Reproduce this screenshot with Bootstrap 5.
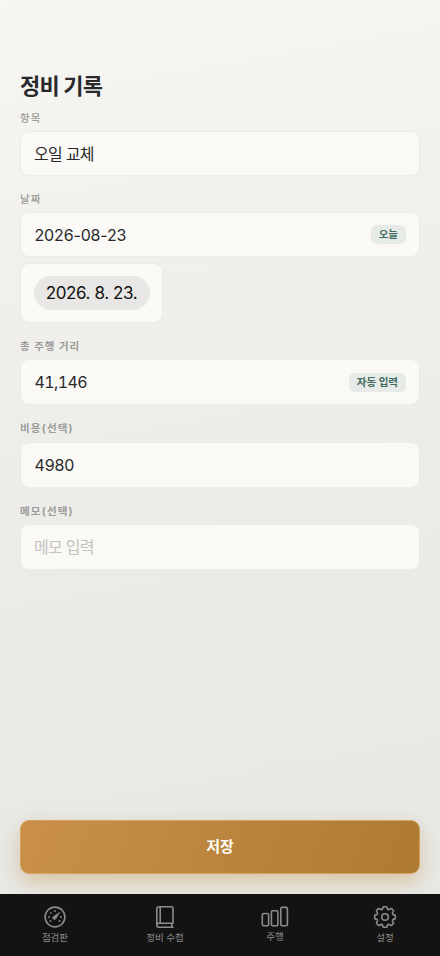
<!DOCTYPE html>
<html lang="ko">
<head>
<meta charset="utf-8">
<meta name="viewport" content="width=device-width, initial-scale=1">
<title>정비 기록</title>
<link href="https://cdn.jsdelivr.net/npm/bootstrap@5.3.0/dist/css/bootstrap.min.css" rel="stylesheet">
<style>
body{font-family:Inter,"Noto Sans CJK KR",sans-serif;color:#29292c;background:#e9eae5;overflow:hidden}
.screen{height:956px;background:linear-gradient(170deg,#f6f6f3 0%,#f0efec 30%,#e9e9e5 70%,#e7e9e5 100%)}
.screen main{padding:0 20px 20px}
.page-title{font-size:22px;font-weight:700;line-height:32px;letter-spacing:-.8px;margin:70px 0 9px}
.field-label{display:block;font-size:10.5px;font-weight:500;line-height:16px;letter-spacing:1px;color:#9b9b98;margin-bottom:4px}
.field-label.strong{font-weight:700;margin-bottom:4.4px}
.field-label.optional{letter-spacing:1.2px}
.field-box{height:45px;border:1px solid #ecebe8;border-radius:9px;background:#faf9f6;padding:0 13px;font-size:16px}
.field-label.strong + .field-box{height:46px}
.field-box input{min-width:0;color:inherit;font-size:16px;line-height:24px;letter-spacing:-.15px;text-indent:.5px}
.field-box input.tabular{font-variant-numeric:tabular-nums;letter-spacing:-.6px}
.field-box input.ko{letter-spacing:-.7px;text-indent:0}
.field-box input::placeholder{color:#c2c2bf;opacity:1}
.chip{font-size:10.5px;font-weight:700;line-height:19px;color:#426b62;background:#e6ebe7;border-radius:6px;padding:0 8px}
.date-card{width:143px;height:60px;border:1px solid #ecebe8;border-radius:9px;background:#faf9f6;margin-top:6px}
.date-pill{width:116px;height:34px;border-radius:17px;background:#e8e7e5;color:#111;font-size:17px;letter-spacing:-.4px;padding-top:2px}
.save-btn,.save-btn:hover{height:54px;border:1px solid #d4a360;border-radius:9px;background:linear-gradient(110deg,#ca9049,#ae7a32);color:#fffdf8;font-size:15px;font-weight:700;box-shadow:0 8px 20px rgba(190,135,60,.38)}
.tabs{height:62px;background:#131313;position:relative}
.tabs a{color:#8b8b8b;font-size:9.5px;line-height:14px;padding-top:11px}
.tabs svg{fill:none;stroke:currentColor;stroke-width:1.6;stroke-linejoin:round;stroke-linecap:round;margin-bottom:2px}
</style>
<script src="https://cdn.jsdelivr.net/npm/bootstrap@5.3.0/dist/js/bootstrap.bundle.min.js"></script>
</head>
<body>
<div class="screen d-flex flex-column">
<main class="d-flex flex-column flex-grow-1">
<h1 class="page-title">정비 기록</h1>
<div>
<label class="field-label" for="item">항목</label>
<div class="field-box d-flex align-items-center"><input id="item" class="ko border-0 bg-transparent p-0 w-100" value="오일 교체"></div>
</div>
<div class="pt-3">
<label class="field-label" for="day">날짜</label>
<div class="field-box d-flex align-items-center"><input id="day" class="border-0 bg-transparent p-0 flex-grow-1" value="2026-08-23"><span class="chip">오늘</span></div>
<div class="date-card d-flex align-items-center justify-content-center"><span class="date-pill d-flex align-items-center justify-content-center">2026. 8. 23.</span></div>
</div>
<div class="pt-3 mt-n1">
<label class="field-label strong" for="odo">총 주행 거리</label>
<div class="field-box d-flex align-items-center"><input id="odo" class="tabular border-0 bg-transparent p-0 flex-grow-1" value="41,146"><span class="chip">자동 입력</span></div>
</div>
<div class="pt-3">
<label class="field-label strong optional" for="cost">비용(선택)</label>
<div class="field-box d-flex align-items-center"><input id="cost" class="border-0 bg-transparent p-0 w-100" value="4980"></div>
</div>
<div class="pt-3">
<label class="field-label strong optional" for="memo">메모(선택)</label>
<div class="field-box d-flex align-items-center"><input id="memo" class="ko border-0 bg-transparent p-0 w-100" placeholder="메모 입력"></div>
</div>
<button class="btn save-btn w-100 mt-auto p-0">저장</button>
</main>
<nav class="tabs d-flex">
<a class="col-3 d-flex flex-column align-items-center text-decoration-none" href="#"><svg width="24" height="24" viewBox="-12 -12 24 24"><circle r="9.9"/><path d="M-1.9 1.7A1.5 1.5 0 0 0 .8 1.7L4.9-4.7-1.3-.8A1.5 1.5 0 0 0-1.9 1.7Z" fill="currentColor" stroke="currentColor" stroke-width=".5"/><g fill="currentColor" stroke="none"><circle cx="0" cy="-6" r=".9"/><circle cx="-4.2" cy="-4.2" r=".9"/><circle cx="-6" cy="0" r=".9"/><circle cx="-4.5" cy="4" r=".9"/><circle cx="6" cy="0" r=".9"/><circle cx="4.5" cy="4" r=".9"/></g></svg>점검판</a>
<a class="col-3 d-flex flex-column align-items-center text-decoration-none" href="#"><svg width="24" height="24" viewBox="0 0 24 24"><path d="M20 18.2V3.2Q20 1.7 18.5 1.7H6.2Q3.8 1.7 3.8 4.2V20Q3.8 22.3 6.2 22.3H20M20 18.2H6.2Q3.8 18.2 3.8 20.2M7.2 2V18M18.9 18.4V22"/></svg>정비 수첩</a>
<a class="col-3 d-flex flex-column align-items-center text-decoration-none" href="#"><svg width="28" height="23" viewBox="0 0 28 23"><rect x="1.3" y="8.5" width="6.3" height="12.3" rx="1.2"/><rect x="10.4" y="5.7" width="6.5" height="15.1" rx="1.2"/><rect x="19.8" y="2.4" width="6.6" height="18.4" rx="1.2"/></svg>주행</a>
<a class="col-3 d-flex flex-column align-items-center text-decoration-none" href="#"><svg width="24" height="24" viewBox="-12 -12 24 24"><circle r="3.3"/><path d="M-1.5-10.3H1.5Q2-10.3 2.1-9.5L2.4-8.1Q3.2-7.2 4.1-7.5L5.4-8.3Q6.2-8.7 6.5-8.4L8.4-6.5Q8.7-6.2 8.3-5.4L7.5-4.1Q7.2-3.2 8.1-2.4L9.5-2.1Q10.3-2 10.3-1.5V1.5Q10.3 2 9.5 2.1L8.1 2.4Q7.2 3.2 7.5 4.1L8.3 5.4Q8.7 6.2 8.4 6.5L6.5 8.4Q6.2 8.7 5.4 8.3L4.1 7.5Q3.2 7.2 2.4 8.1L2.1 9.5Q2 10.3 1.5 10.3H-1.5Q-2 10.3-2.1 9.5L-2.4 8.1Q-3.2 7.2-4.1 7.5L-5.4 8.3Q-6.2 8.7-6.5 8.4L-8.4 6.5Q-8.7 6.2-8.3 5.4L-7.5 4.1Q-7.2 3.2-8.1 2.4L-9.5 2.1Q-10.3 2-10.3 1.5V-1.5Q-10.3-2-9.5-2.1L-8.1-2.4Q-7.2-3.2-7.5-4.1L-8.3-5.4Q-8.7-6.2-8.4-6.5L-6.5-8.4Q-6.2-8.7-5.4-8.3L-4.1-7.5Q-3.2-7.2-2.4-8.1L-2.1-9.5Q-2-10.3-1.5-10.3Z"/></svg>설정</a>
</nav>
</div>
</body>
</html>
